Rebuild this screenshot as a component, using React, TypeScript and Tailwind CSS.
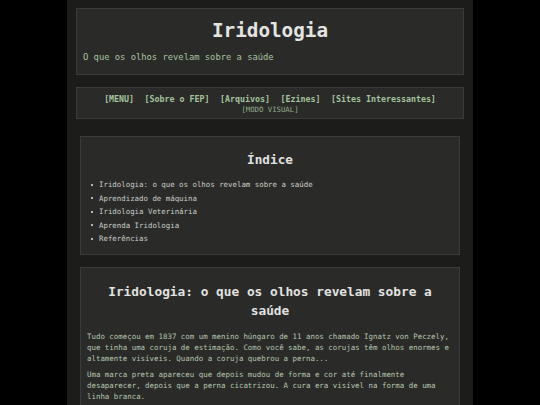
import React from "react";

const mono = { fontFamily: '"DejaVu Sans Mono", "Liberation Mono", monospace' };

export default function App() {
  const items = [
    "Iridologia: o que os olhos revelam sobre a saúde",
    "Aprendizado de máquina",
    "Iridologia Veterinária",
    "Aprenda Iridologia",
    "Referências",
  ];
  return (
    <div className="w-[540px] h-[405px] bg-black overflow-hidden" style={mono}>
      <div className="mx-auto w-[406px] min-h-[405px] bg-[#1c1d1b] px-[9px] pt-[8px]">
        <header className="bg-[#2a2b29] border border-[#3a3c39] h-[67px] px-[6px] pt-[9px]">
          <h1 className="text-center text-[19.3px] leading-[26px] font-bold text-[#e4e4e2]">Iridologia</h1>
          <p className="mt-[7px] text-[8.8px] leading-[12px] text-[#a9c3a0]">O que os olhos revelam sobre a saúde</p>
        </header>
        <nav className="mt-[12px] bg-[#2a2b29] border border-[#3a3c39] h-[32px] pt-[5px] text-center">
          <div className="flex justify-center gap-[10.5px] text-[8.3px] leading-[12px] font-bold text-[#a4c39c]">
            <span>[MENU]</span>
            <span>[Sobre o FEP]</span>
            <span>[Arquivos]</span>
            <span>[Ezines]</span>
            <span>[Sites Interessantes]</span>
          </div>
          <div className="text-[7.3px] leading-[10px] text-[#94ab8d]">[MODO VISUAL]</div>
        </nav>
        <div className="px-[4px]">
          <section className="mt-[17px] bg-[#2a2b29] border border-[#3a3c39] h-[119px] px-[8px] pt-[14px]">
            <h2 className="text-center text-[12.7px] leading-[18px] font-bold text-[#e2e2e0]">Índice</h2>
            <ul className="mt-[9px] flex flex-col">
              {items.map((t) => (
                <li key={t} className="flex items-center text-[7.4px] leading-[13.5px] text-[#c9ccc6]">
                  <span className="w-[2px] h-[2px] bg-[#a4c39c] mr-[6px] ml-[2px]" />
                  {t}
                </li>
              ))}
            </ul>
          </section>
          <section className="mt-[12px] bg-[#2a2b29] border border-[#3a3c39] pl-[6px] pr-[2px] pt-[14px] pb-[10px]">
            <h2 className="text-center text-[12.8px] leading-[19px] font-bold text-[#e2e2e0] pl-[18px] pr-[22px]">
              Iridologia: o que os olhos revelam sobre a saúde
            </h2>
            <p className="mt-[11px] text-[7.43px] leading-[11px] text-[#b5c5ae]">
              Tudo começou em 1837 com um menino húngaro de 11 anos chamado Ignatz von Peczely, que tinha uma coruja de estimação. Como você sabe, as corujas têm olhos enormes e altamente visíveis. Quando a coruja quebrou a perna...
            </p>
            <p className="mt-[5px] text-[7.43px] leading-[11px] text-[#b5c5ae]">
              Uma marca preta apareceu que depois mudou de forma e cor até finalmente desaparecer, depois que a perna cicatrizou. A cura era visível na forma de uma linha branca.
            </p>
          </section>
        </div>
      </div>
    </div>
  );
}
